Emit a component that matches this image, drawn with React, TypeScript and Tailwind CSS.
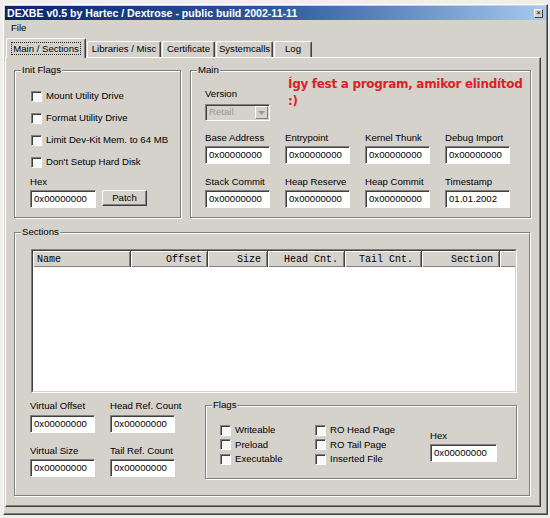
import React from "react";

const BG = "bg-[#d5d2cc]";

function Input({ value = "0x00000000", w = "w-[65px]" }: { value?: string; w?: string }) {
  return (
    <div
      className={`${w} h-[18px] bg-white border border-t-[#808080] border-l-[#808080] border-b-white border-r-white shadow-[inset_1px_1px_0_#404040] pl-[3px] flex items-center leading-none text-black`}
    >
      {value}
    </div>
  );
}

function Field({ label, value, w, className = "", gap = "mt-[2px]" }: { label: string; value?: string; w?: string; className?: string; gap?: string }) {
  return (
    <div className={`flex flex-col w-[65px] ${className}`}>
      <div className="h-[12px] leading-[12px] whitespace-nowrap">{label}</div>
      <div className={gap}>
        <Input value={value} w={w} />
      </div>
    </div>
  );
}

function Check({ label, h = "h-[22px]" }: { label: string; h?: string }) {
  return (
    <div className={`flex items-center ${h}`}>
      <span className="w-[11px] h-[11px] bg-[#f8f8f6] border border-t-[#808080] border-l-[#808080] border-b-white border-r-white shadow-[inset_1px_1px_0_#404040] shrink-0" />
      <span className="ml-[4px] whitespace-nowrap">{label}</span>
    </div>
  );
}

function Group({ label, className = "", children }: { label: string; className?: string; children?: React.ReactNode }) {
  return (
    <div className={`relative border border-[#808080] shadow-[inset_1px_1px_0_#fff,1px_1px_0_#fff] ${className}`}>
      <span className={`absolute -top-[7px] left-[6px] ${BG} px-[1px] leading-[12px] h-[12px]`}>{label}</span>
      {children}
    </div>
  );
}

function Tab({ label, w, selected = false }: { label: string; w: string; selected?: boolean }) {
  if (selected) {
    return (
      <div
        className={`${w} h-[20px] ${BG} relative z-10 -mb-[1px] border-l border-t border-l-white border-t-white border-r border-r-[#404040] shadow-[inset_-1px_0_0_#808080] rounded-t-[2px] flex items-center justify-center`}
      >
        <span className="outline outline-1 outline-dotted outline-[#222] px-[1px] leading-[11px] whitespace-nowrap">{label}</span>
      </div>
    );
  }
  return (
    <div
      className={`${w} h-[16px] ${BG} border-l border-t border-l-white border-t-white border-r border-r-[#404040] shadow-[inset_-1px_0_0_#808080] rounded-t-[2px] flex items-center justify-center whitespace-nowrap`}
    >
      {label}
    </div>
  );
}

function HeadCell({ label, w, align = "justify-end", pr = "pr-[5px]" }: { label: string; w: string; align?: string; pr?: string }) {
  return (
    <div
      className={`${w} h-full flex items-center ${align} ${pr} pl-[4px] border-r border-r-[#404040] shadow-[inset_1px_1px_0_#fff,inset_-1px_-1px_0_#808080] whitespace-nowrap`}
    >
      {label}
    </div>
  );
}

export default function App() {
  return (
    <div className="w-[550px] h-[518px] bg-[#eeeeec] overflow-hidden font-['Liberation_Sans',Arial,sans-serif] text-[9.6px] text-black">
      <div
        className={`ml-[3px] mt-[4px] w-[545px] h-[511px] ${BG} border border-l-white border-t-white border-r-[#404040] border-b-[#404040] shadow-[inset_-1px_-1px_0_#808080] p-[1px] flex flex-col`}
      >
        {/* Title bar */}
        <div className="h-[14px] bg-gradient-to-r from-[#0a246a] via-[#2f5a9c] to-[#a6caf0] flex items-center justify-between pl-[2px] pr-[3px]">
          <span className="text-white font-bold text-[10.6px] leading-none whitespace-nowrap">
            DEXBE v0.5 by Hartec / Dextrose - public build 2002-11-11
          </span>
          <span className={`w-[9px] h-[9px] ${BG} border border-l-white border-t-white border-r-[#404040] border-b-[#404040] flex items-center justify-center text-[8px] leading-none`}>
            ×
          </span>
        </div>
        {/* Menu */}
        <div className="h-[17px] flex items-center pl-[6px]">File</div>
        {/* Tabs */}
        <div className="h-[20px] flex items-end pl-[1px] gap-[1px]">
          <Tab label="Main / Sections" w="w-[80px]" selected />
          <Tab label="Libraries / Misc" w="w-[74px]" />
          <Tab label="Certificate" w="w-[53px]" />
          <Tab label="Systemcalls" w="w-[57px]" />
          <Tab label="Log" w="w-[38px]" />
        </div>
        {/* Panel */}
        <div className="w-[536px] h-[450px] border border-l-white border-t-white border-r-[#404040] border-b-[#404040] shadow-[inset_-1px_-1px_0_#808080]">
          <div className="flex mt-[12px] ml-[8px] gap-[9px]">
            {/* Init Flags */}
            <Group label="Init Flags" className="w-[167px] h-[148px]">
              <div className="mt-[14px] pl-[16px] flex flex-col">
                <Check label="Mount Utility Drive" />
                <Check label="Format Utility Drive" />
                <Check label="Limit Dev-Kit Mem. to 64 MB" />
                <Check label="Don't Setup Hard Disk" />
              </div>
              <div className="pl-[15px] mt-[3px] h-[12px] leading-[12px]">Hex</div>
              <div className="pl-[15px] mt-[2px] flex items-start gap-[6px]">
                <Input w="w-[66px]" />
                <div
                  className={`w-[45px] h-[16px] ${BG} border border-l-white border-t-white border-r-[#404040] border-b-[#404040] shadow-[inset_-1px_-1px_0_#808080] flex items-center justify-center`}
                >
                  Patch
                </div>
              </div>
            </Group>
            {/* Main */}
            <Group label="Main" className="w-[341px] h-[148px]">
              <div className="flex mt-[5px] pl-[14px]">
                <div className="w-[83px] flex flex-col">
                  <div className="mt-[12px] h-[12px] leading-[12px]">Version</div>
                  <div className="mt-[4px] w-[65px] h-[17px] bg-[#d5d2cc] border border-t-[#808080] border-l-[#808080] border-b-white border-r-white shadow-[inset_1px_1px_0_#404040] flex items-center justify-between pl-[3px] pr-[1px]">
                    <span className="text-[#9a9894]">Retail</span>
                    <span
                      className={`w-[13px] h-[13px] ${BG} border border-l-white border-t-white border-r-[#808080] border-b-[#808080] flex items-center justify-center`}
                    >
                      <svg width="7" height="4" viewBox="0 0 7 4">
                        <path d="M0 0h7L3.5 4z" fill="#9a9894" />
                      </svg>
                    </span>
                  </div>
                </div>
                <div className="text-[#de1f24] font-bold text-[12px] leading-[17px] font-['DejaVu_Sans',sans-serif] tracking-[-0.3px] whitespace-nowrap">
                  Így fest a program, amikor elindítod
                  <br />
                  :)
                </div>
              </div>
              <div className="flex pl-[14px] gap-[15px] mt-[11px]">
                <Field label="Base Address" />
                <Field label="Entrypoint" />
                <Field label="Kernel Thunk" />
                <Field label="Debug Import" />
              </div>
              <div className="flex pl-[14px] gap-[15px] mt-[12px]">
                <Field label="Stack Commit" />
                <Field label="Heap Reserve" />
                <Field label="Heap Commit" />
                <Field label="Timestamp" value="01.01.2002" />
              </div>
            </Group>
          </div>
          {/* Sections */}
          <div className="ml-[8px] mt-[14px]">
            <Group label="Sections" className="w-[516px] h-[264px]">
              <div className="ml-[16px] mt-[16px] w-[486px] h-[144px] border border-t-[#808080] border-l-[#808080] border-b-white border-r-white">
                <div className="w-full h-full border border-t-[#404040] border-l-[#404040] border-b-[#d5d2cc] border-r-[#d5d2cc] bg-white flex flex-col">
                  <div className={`h-[16px] flex ${BG} font-['Liberation_Mono',monospace] text-[10px]`}>
                    <HeadCell label="Name" w="w-[98px]" align="justify-start" pr="pr-[2px]" />
                    <HeadCell label="Offset" w="w-[77px]" />
                    <HeadCell label="Size" w="w-[60px]" pr="pr-[6px]" />
                    <HeadCell label="Head Cnt." w="w-[77px]" pr="pr-[6px]" />
                    <HeadCell label="Tail Cnt." w="w-[77px]" pr="pr-[8px]" />
                    <HeadCell label="Section" w="w-[78px]" pr="pr-[6px]" />
                    <div className="flex-1 h-full shadow-[inset_1px_1px_0_#fff,inset_0_-1px_0_#808080]" />
                  </div>
                  <div className="flex-1 bg-white" />
                </div>
              </div>
              <div className="flex pl-[15px] mt-[7px]">
                <div className="flex flex-col w-[145px] shrink-0">
                  <div className="flex gap-[15px]">
                    <Field label="Virtual Offset" gap="mt-[3px]" />
                    <Field label="Head Ref. Count" gap="mt-[3px]" />
                  </div>
                  <div className="flex gap-[15px] mt-[12px]">
                    <Field label="Virtual Size" />
                    <Field label="Tail Ref. Count" />
                  </div>
                </div>
                <Group label="Flags" className="ml-[30px] mt-[5px] w-[312px] h-[74px]">
                  <div className="flex mt-[17px] pl-[14px]">
                    <div className="w-[95px] flex flex-col">
                      <Check label="Writeable" h="h-[14.5px]" />
                      <Check label="Preload" h="h-[14.5px]" />
                      <Check label="Executable" h="h-[14.5px]" />
                    </div>
                    <div className="w-[115px] flex flex-col">
                      <Check label="RO Head Page" h="h-[14.5px]" />
                      <Check label="RO Tail Page" h="h-[14.5px]" />
                      <Check label="Inserted File" h="h-[14.5px]" />
                    </div>
                    <div className="flex flex-col mt-[7px]">
                      <div className="h-[12px] leading-[12px]">Hex</div>
                      <div className="mt-[2px]">
                        <Input w="w-[67px]" />
                      </div>
                    </div>
                  </div>
                </Group>
              </div>
            </Group>
          </div>
        </div>
      </div>
    </div>
  );
}
